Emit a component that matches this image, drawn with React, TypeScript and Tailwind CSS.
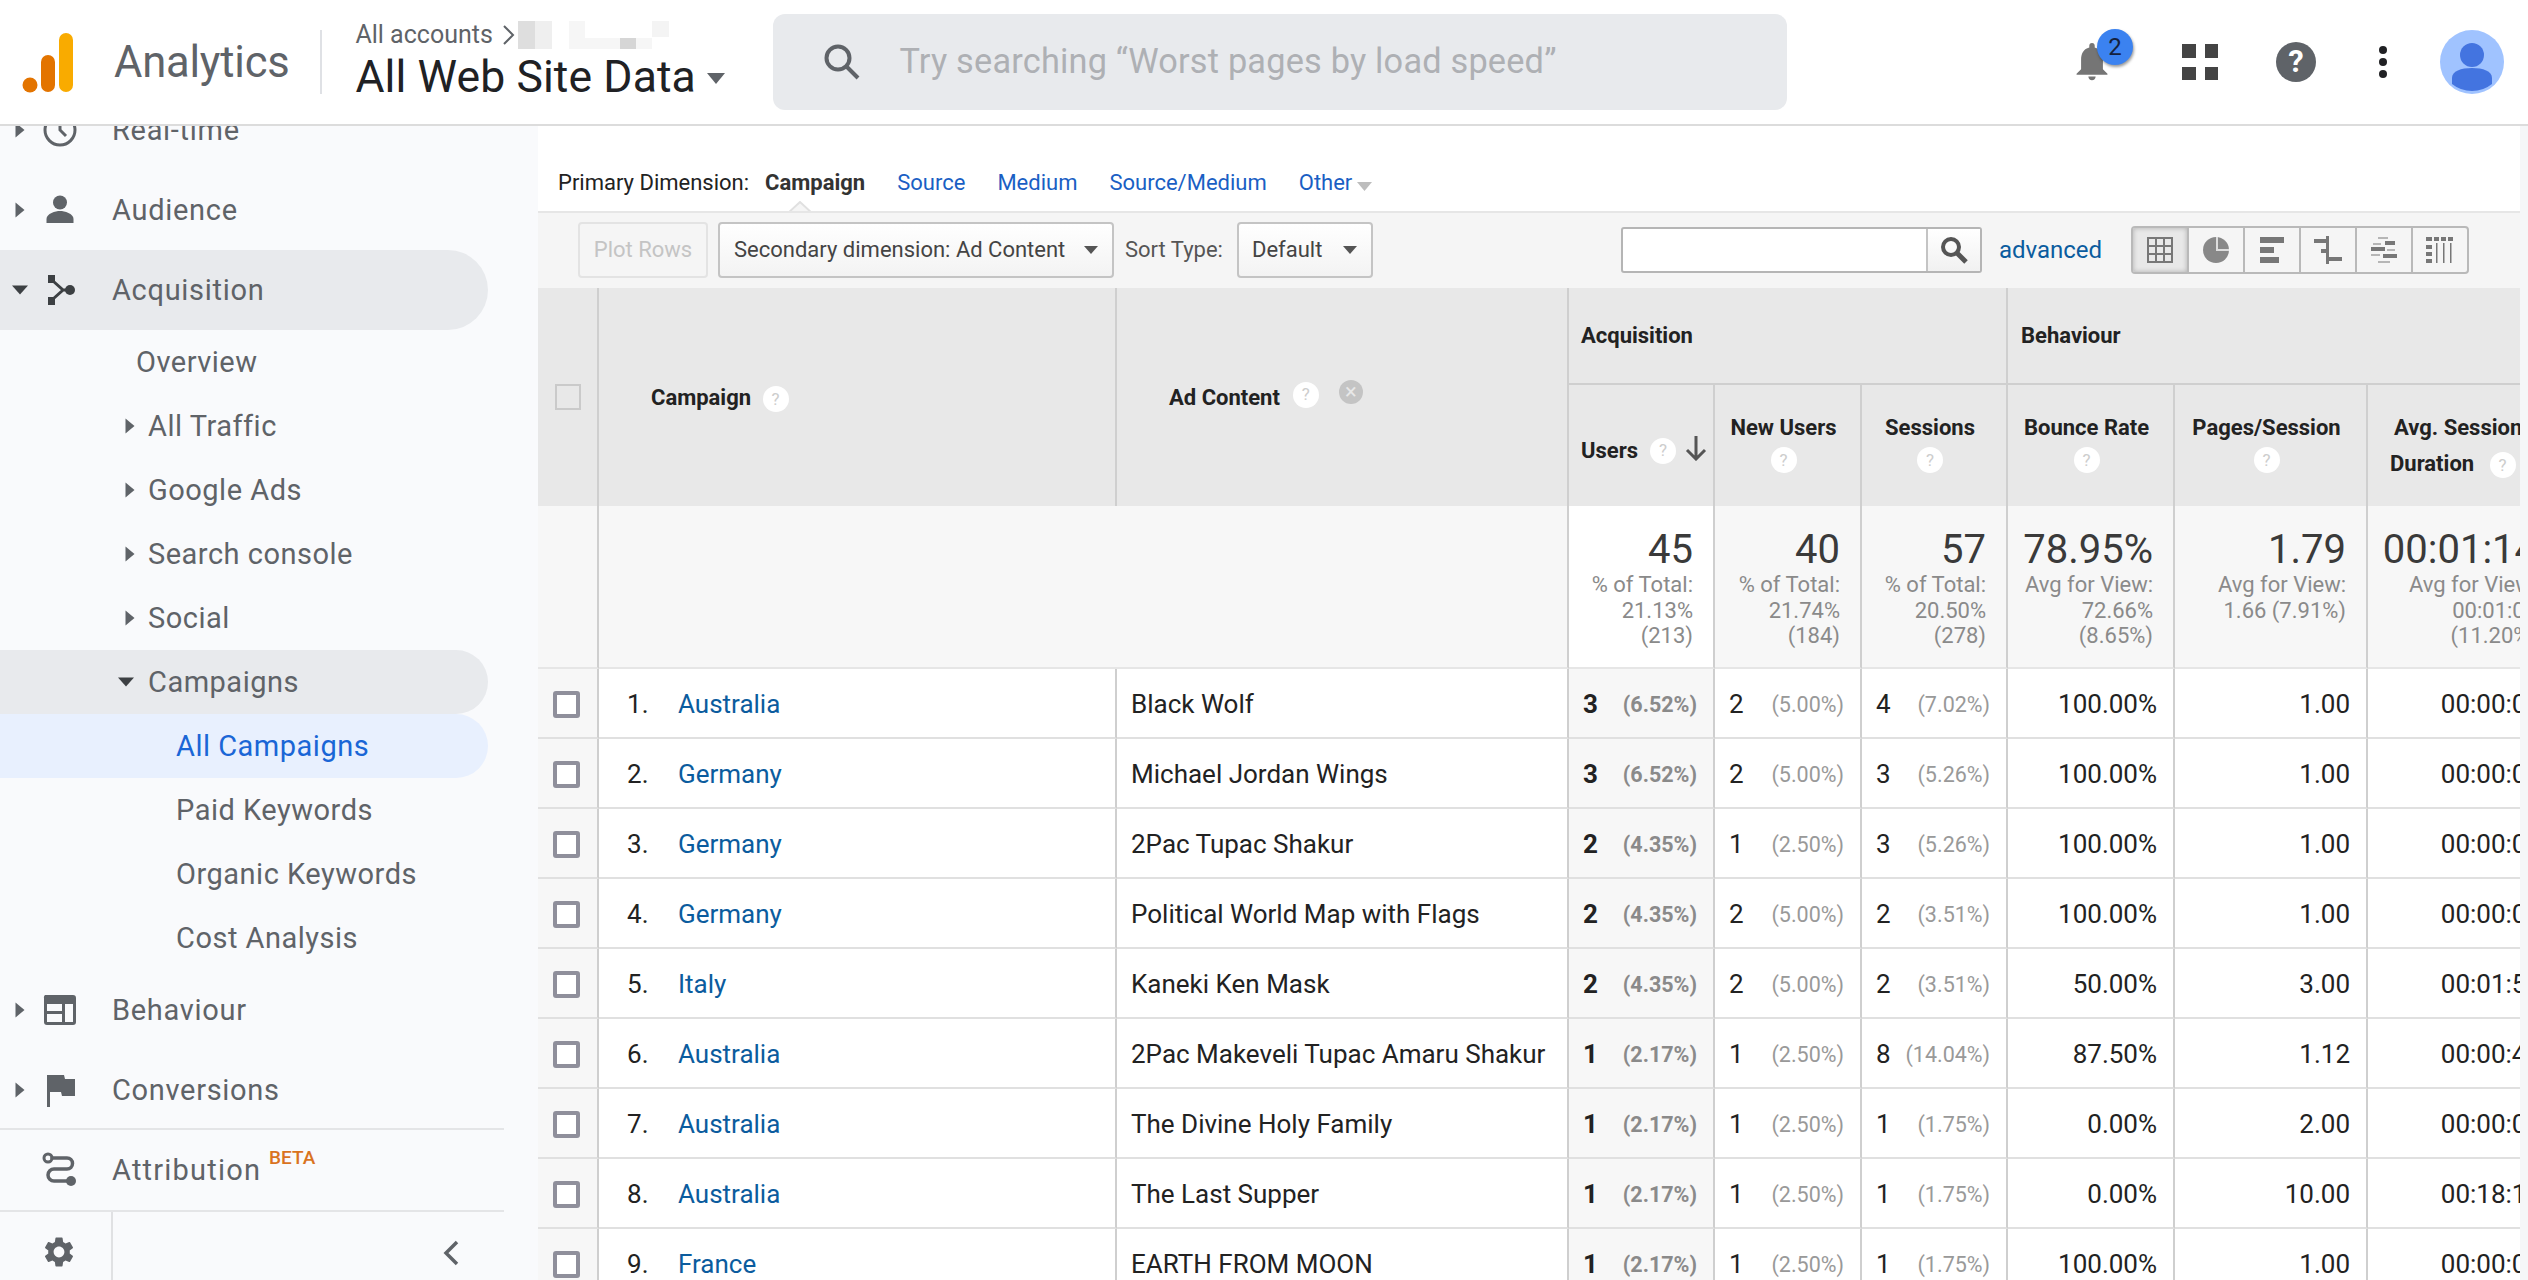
import { type ReactNode } from "react";

function Caret({ open = false, dark = false }: { open?: boolean; dark?: boolean }) {
  if (open) {
    return (
      <svg width="18" height="10" viewBox="0 0 18 10" className="shrink-0">
        <path d="M1 0.5h16L9 9.5z" fill={dark ? "#3c4043" : "#5f6368"} />
      </svg>
    );
  }
  return (
    <svg width="10" height="16" viewBox="0 0 10 16" className="shrink-0">
      <path d="M0.5 0.5L9.5 8L0.5 15.5z" fill="#5f6368" />
    </svg>
  );
}

function NavIcon({ name }: { name: string }) {
  const fill = "#5f6368";
  if (name === "clock")
    return (
      <svg width="36" height="36" viewBox="0 0 36 36" fill="none">
        <circle cx="18" cy="18" r="15" stroke={fill} strokeWidth="3" />
        <path d="M18 9v9l6 6" stroke={fill} strokeWidth="3" />
      </svg>
    );
  if (name === "person")
    return (
      <svg width="36" height="36" viewBox="0 0 36 36">
        <circle cx="18" cy="10.5" r="7" fill={fill} />
        <path d="M4.500 31v-4c0-5.500 9-8 13.500-8s13.500 2.500 13.500 8v4z" fill={fill} />
      </svg>
    );
  if (name === "fork")
    return (
      <svg width="36" height="36" viewBox="0 0 36 36" fill="none">
        <path d="M6 3h7v8H6zM6 25h7v8H6z" fill="#3c4043" />
        <path d="M11 9l10 9-10 9M21 18h6" stroke="#3c4043" strokeWidth="3" />
        <circle cx="28" cy="18" r="5" fill="#3c4043" />
      </svg>
    );
  if (name === "layout")
    return (
      <svg width="36" height="36" viewBox="0 0 36 36">
        <path
          fillRule="evenodd"
          clipRule="evenodd"
          d="M3 3h28a3 3 0 0 1 3 3v24a3 3 0 0 1-3 3H5a3 3 0 0 1-3-3V6a3 3 0 0 1 1-3zM5 12v7h15v-7zm18 0v18h8V12zM5 22v8h15v-8z"
          fill={fill}
        />
      </svg>
    );
  if (name === "flag")
    return (
      <svg width="36" height="36" viewBox="0 0 36 36">
        <path d="M5 3h3v32H5zM8 3h14l1 4h10v17H20l-1-4H8z" fill={fill} />
      </svg>
    );
  if (name === "route")
    return (
      <svg width="36" height="36" viewBox="0 0 36 36" fill="none">
        <circle cx="6" cy="6" r="4" stroke={fill} strokeWidth="3" />
        <path
          d="M10 6h15a5.500 5.500 0 0 1 0 11H12a6 6 0 0 0 0 12h14"
          stroke={fill}
          strokeWidth="3.500"
          strokeLinecap="round"
        />
        <circle cx="29" cy="29" r="5" fill={fill} />
      </svg>
    );
  return null;
}

function NavItem({
  label,
  icon,
  state,
  active,
}: {
  label: ReactNode;
  icon: string;
  state?: "closed" | "open";
  active?: boolean;
}) {
  return (
    <div
      className={`flex h-[80px] shrink-0 items-center rounded-r-[40px] ${active ? "w-[488px] bg-[#e8eaed]" : "w-full"}`}
    >
      <div className="flex w-[40px] justify-center">
        {state && <Caret open={state === "open"} dark />}
      </div>
      <div className="flex w-[40px] justify-center">
        <NavIcon name={icon} />
      </div>
      <div className="ml-[32px] pt-[2px] text-[29px] tracking-[0.7px] whitespace-nowrap">{label}</div>
    </div>
  );
}

function SubItem({
  label,
  level,
  state,
}: {
  label: string;
  level: 1 | 2;
  state?: "closed" | "open";
}) {
  const open = state === "open";
  const selected = label === "All Campaigns";
  return (
    <div
      className={`flex h-[64px] shrink-0 items-center rounded-r-[32px] text-[29px] tracking-[0.5px] ${
        open ? "bg-[#e8eaed]" : selected ? "bg-[#e8f0fe] text-[#1a66d6]" : ""
      } ${open || selected ? "w-[488px]" : "w-full"}`}
    >
      {level === 2 ? (
        <div className="w-[176px]" />
      ) : state ? (
        <div className="flex w-[148px] items-center justify-end pr-[13px]">
          <Caret open={open} dark={open} />
        </div>
      ) : (
        <div className="w-[136px]" />
      )}
      <span className="pt-[2px] whitespace-nowrap">{label}</span>
    </div>
  );
}

function Sidebar() {
  return (
    <aside className="flex h-full w-[538px] shrink-0 flex-col overflow-hidden bg-[#f9fafc] text-[#5f6368]">
      <div className="-mt-[36px]">
        <NavItem label="Real-time" icon="clock" state="closed" />
      </div>
      <NavItem label="Audience" icon="person" state="closed" />
      <NavItem label="Acquisition" icon="fork" state="open" active />
      <SubItem label="Overview" level={1} />
      <SubItem label="All Traffic" level={1} state="closed" />
      <SubItem label="Google Ads" level={1} state="closed" />
      <SubItem label="Search console" level={1} state="closed" />
      <SubItem label="Social" level={1} state="closed" />
      <SubItem label="Campaigns" level={1} state="open" />
      <SubItem label="All Campaigns" level={2} />
      <SubItem label="Paid Keywords" level={2} />
      <SubItem label="Organic Keywords" level={2} />
      <SubItem label="Cost Analysis" level={2} />
      <NavItem label="Behaviour" icon="layout" state="closed" />
      <NavItem label="Conversions" icon="flag" state="closed" />
      <div className="-mt-[2px] h-[2px] w-[504px] shrink-0 bg-[#e4e5e7]" />
      <NavItem
        icon="route"
        label={
          <span className="flex">
            <span className="tracking-[1.200px]">Attribution</span>
            <span className="mt-[-5px] ml-[8px] text-[19px] font-medium tracking-normal text-[#d9731f]">BETA</span>
          </span>
        }
      />
      <div className="h-[2px] w-[504px] shrink-0 bg-[#e4e5e7]" />
      <div className="flex h-[80px] w-[504px] shrink-0">
        <div className="flex h-full w-[113px] justify-center border-r-2 border-[#e0e1e3] pt-[22px] pl-[6px]">
          <svg width="36" height="36" viewBox="0 0 24 24" fill="#5f6368">
            <path d="M19.140 12.940c.040-.300.060-.610.060-.940 0-.320-.020-.640-.070-.940l2.030-1.580a.49.49 0 0 0 .120-.610l-1.920-3.320a.488.488 0 0 0-.590-.220l-2.390.960c-.500-.380-1.030-.700-1.620-.940l-.360-2.540a.484.484 0 0 0-.480-.410h-3.840c-.240 0-.430.170-.470.410l-.360 2.540c-.590.240-1.130.570-1.620.940l-2.390-.960c-.220-.080-.470 0-.590.220L2.740 8.870c-.120.210-.080.470.120.610l2.030 1.580c-.050.300-.090.630-.090.940s.020.640.070.940l-2.030 1.580a.49.49 0 0 0-.120.610l1.920 3.320c.120.220.370.290.590.220l2.390-.960c.500.380 1.030.700 1.620.940l.360 2.540c.050.240.240.410.480.410h3.840c.240 0 .440-.170.470-.410l.360-2.540c.590-.240 1.130-.560 1.620-.940l2.390.960c.220.080.470 0 .590-.220l1.920-3.320c.120-.220.070-.470-.120-.610l-2.010-1.580zM12 15.600A3.610 3.610 0 0 1 8.400 12c0-1.980 1.620-3.600 3.600-3.600s3.600 1.620 3.600 3.600-1.620 3.600-3.600 3.600z" />
          </svg>
        </div>
        <div className="flex flex-1 justify-end pt-[28px]">
          <svg width="18" height="26" viewBox="0 0 18 26" fill="none" className="mr-[44px]">
            <path d="M15 2L4 13l11 11" stroke="#5f6368" strokeWidth="3.500" />
          </svg>
        </div>
      </div>
    </aside>
  );
}

function TopBar() {
  return (
    <header className="flex h-[126px] shrink-0 items-center border-b-2 border-[#dcdcdc] bg-white">
      <svg width="52" height="60" viewBox="0 0 52 60" className="mt-[1px] ml-[22px] shrink-0">
        <circle cx="8" cy="52" r="7.500" fill="#e37400" />
        <rect x="19" y="22" width="14" height="37" rx="7" fill="#e37400" />
        <rect x="37" y="0" width="14" height="59" rx="7" fill="#f9ab00" />
      </svg>
      <div className="mt-[2px] ml-[40px] text-[43.500px] leading-none tracking-[-0.2px] text-[#5f6368]">Analytics</div>
      <div className="ml-[31px] h-[64px] w-[2px] bg-[#dfe1e5]" />
      <div className="ml-[33px] -mt-[4px] w-[418px] shrink-0">
        <div className="flex h-[30px] items-center text-[25px] leading-none text-[#5f6368]">
          All accounts
          <svg width="14" height="24" viewBox="0 0 14 24" fill="none" className="ml-[9px]">
            <path d="M2 3l9 9-9 9" stroke="#5f6368" strokeWidth="2" />
          </svg>
          <div className="ml-[2px] flex h-[28px] items-start">
            <div className="h-[28px] w-[17px] bg-[#dedede]" />
            <div className="h-[28px] w-[17px] bg-[#efefef]" />
            <div className="ml-[17px] h-[28px] w-[16px] bg-[#f6f6f6]" />
            <div className="mt-[17px] h-[11px] w-[35px] bg-[#f6f6f6]" />
            <div className="mt-[17px] h-[11px] w-[16px] bg-[#d6d6d6]" />
            <div className="mt-[17px] h-[11px] w-[16px] bg-[#f6f6f6]" />
            <div className="h-[16px] w-[17px] bg-[#f4f4f4]" />
          </div>
        </div>
        <div className="mt-[3px] flex items-center text-[44.500px] leading-[48px] tracking-[0.1px] text-[#202124]">
          All Web Site Data
          <svg width="18" height="11" viewBox="0 0 18 11" className="mt-[3px] ml-[11px]">
            <path d="M0 0h18L9 11z" fill="#5f6368" />
          </svg>
        </div>
      </div>
      <div className="flex h-[96px] w-[1014px] shrink-0 items-center rounded-[12px] bg-[#e8eaed] pl-[50px] text-[34.300px] text-[#aeb0b4]">
        <svg width="38" height="38" viewBox="0 0 38 38" fill="none">
          <circle cx="15" cy="15" r="11.500" stroke="#5f6368" strokeWidth="4" />
          <path d="M23 23l12 12" stroke="#5f6368" strokeWidth="4" />
        </svg>
        <span className="ml-[38px] tracking-[0.2px] whitespace-nowrap">Try searching “Worst pages by load speed”</span>
      </div>
      <div className="ml-auto flex h-full items-center">
        <div className="relative flex h-[40px] w-[34px] justify-center">
          <svg width="34" height="40" viewBox="0 0 36 44">
            <path d="M18 1c2 0 3 1.500 3 3v2c6 1.500 9 6.500 9 13v11l5 5v1H1v-1l5-5V19c0-6.500 3-11.500 9-13V4c0-1.500 1-3 3-3zM14 38h8c0 2.500-1.800 4-4 4s-4-1.500-4-4z" fill="#757575" />
          </svg>
          <div className="absolute top-[-13px] left-[22px] flex h-[36px] w-[36px] items-center justify-center rounded-full bg-[#3b82f0] text-[24px] text-[#14213d] shadow-[1px_2px_3px_rgba(0,0,0,0.4)]">
            2
          </div>
        </div>
        <div className="ml-[73px] grid h-[36px] w-[36px] grid-cols-2 gap-x-[9px] gap-y-[9px]">
          <div className="bg-[#444]" />
          <div className="bg-[#444]" />
          <div className="bg-[#444]" />
          <div className="bg-[#444]" />
        </div>
        <div className="ml-[58px] flex h-[40px] w-[40px] items-center justify-center rounded-full bg-[#5f6368] text-[31px] font-bold text-white">
          ?
        </div>
        <div className="ml-[63px] flex w-[8px] flex-col gap-[4px]">
          <div className="h-[8px] w-[8px] rounded-full bg-[#202124]" />
          <div className="h-[8px] w-[8px] rounded-full bg-[#202124]" />
          <div className="h-[8px] w-[8px] rounded-full bg-[#202124]" />
        </div>
        <svg width="64" height="64" viewBox="0 0 64 64" className="mr-[24px] ml-[53px]">
          <circle cx="32" cy="32" r="32" fill="#a0c3ff" />
          <circle cx="32" cy="25" r="12" fill="#4374e0" />
          <path d="M12 54V48c0-7 9-10 20-10s20 3 20 10v6a32 32 0 0 1-40 0z" fill="#4374e0" />
        </svg>
      </div>
    </header>
  );
}

function Help({ className = "" }: { className?: string }) {
  return (
    <span
      className={`inline-flex h-[26px] w-[26px] items-center justify-center rounded-full bg-white text-[17px] leading-none font-normal text-[#cdcdcd] ${className}`}
    >
      ?
    </span>
  );
}

function Dropdown({ label, className }: { label: string; className: string }) {
  return (
    <div
      className={`flex h-[56px] items-center justify-between rounded-[4px] border-2 border-[#c4c4c4] bg-gradient-to-b from-white to-[#f3f3f3] text-[22px] text-[#444] ${className}`}
    >
      <span className="whitespace-nowrap">{label}</span>
      <svg width="14" height="8" viewBox="0 0 14 8">
        <path d="M0 0h14L7 8z" fill="#555" />
      </svg>
    </div>
  );
}

function ViewIcon({ index }: { index: number }) {
  const c = "#777";
  if (index === 0)
    return (
      <svg width="28" height="28" viewBox="0 0 28 28" fill="none" stroke={c} strokeWidth="2">
        <path d="M2 2h24v24H2zM10 2v24M18 2v24M2 10h24M2 18h24" />
      </svg>
    );
  if (index === 1)
    return (
      <svg width="28" height="28" viewBox="0 0 28 28">
        <circle cx="14" cy="14" r="13" fill="#888" />
        <path d="M15 1v13h12" stroke="#ddd" strokeWidth="2" fill="none" />
      </svg>
    );
  if (index === 2)
    return (
      <svg width="26" height="28" viewBox="0 0 26 28" fill={c}>
        <rect x="1" y="1" width="24" height="6" />
        <rect x="1" y="11" width="14" height="6" />
        <rect x="1" y="21" width="19" height="6" />
      </svg>
    );
  if (index === 3)
    return (
      <svg width="28" height="28" viewBox="0 0 28 28" fill={c}>
        <rect x="0" y="3" width="14" height="4" />
        <rect x="12" y="0" width="3" height="28" />
        <rect x="7" y="13" width="8" height="4" />
        <rect x="12" y="21" width="16" height="4" />
      </svg>
    );
  if (index === 4)
    return (
      <svg width="28" height="28" viewBox="0 0 28 28" fill={c}>
        <rect x="8" y="1" width="10" height="2" opacity="0.5" />
        <rect x="15" y="5" width="10" height="4" />
        <rect x="3" y="7" width="8" height="2" opacity="0.5" />
        <rect x="1" y="11" width="14" height="4" />
        <rect x="17" y="13" width="8" height="2" opacity="0.5" />
        <rect x="13" y="18" width="14" height="4" />
        <rect x="1" y="18" width="9" height="2" opacity="0.5" />
        <rect x="8" y="25" width="12" height="2" opacity="0.5" />
      </svg>
    );
  return (
    <svg width="30" height="28" viewBox="0 0 30 28" fill={c}>
      <rect x="1" y="1" width="6" height="4" />
      <rect x="1" y="9" width="6" height="4" />
      <rect x="1" y="16" width="6" height="4" />
      <rect x="1" y="23" width="6" height="4" />
      <rect x="9" y="1" width="5" height="4" />
      <rect x="16" y="1" width="5" height="4" />
      <rect x="23" y="1" width="5" height="4" />
      <rect x="11" y="7" width="1.500" height="20" />
      <rect x="18" y="7" width="1.500" height="20" />
      <rect x="25" y="7" width="1.500" height="20" />
    </svg>
  );
}

function Toolbar() {
  return (
    <div className="relative h-[77px] shrink-0 border-t-2 border-[#e6e6e6] bg-[#f5f5f5]">
      <div className="flex h-full items-center pb-[2px] pl-[40px]">
        <div className="flex h-[56px] w-[130px] items-center justify-center rounded-[4px] border-2 border-[#e3e3e3] text-[22px] text-[#c4c4c4]">
          Plot Rows
        </div>
        <Dropdown label="Secondary dimension: Ad Content" className="ml-[10px] w-[396px] pr-[14px] pl-[14px]" />
        <span className="ml-[11px] text-[22px] text-[#555]">Sort Type:</span>
        <Dropdown label="Default" className="ml-[14px] w-[136px] pr-[14px] pl-[13px]" />
        <div className="ml-[248px] flex h-[46px] w-[361px] rounded-[3px] border-2 border-[#b5b5b5] bg-white">
          <div className="flex-1 border-r-2 border-[#c4c4c4]" />
          <div className="flex w-[52px] items-center justify-center bg-gradient-to-b from-white to-[#f1f1f1]">
            <svg width="28" height="28" viewBox="0 0 28 28" fill="none">
              <circle cx="11" cy="11" r="8" stroke="#555" strokeWidth="4" />
              <path d="M17 17l9 9" stroke="#555" strokeWidth="5" />
            </svg>
          </div>
        </div>
        <span className="ml-[17px] text-[24px] text-[#0b5c9e]">advanced</span>
        <div className="ml-[29px] flex h-[48px] w-[338px] overflow-hidden rounded-[4px] border-2 border-[#b9b9b9]">
          {[0, 1, 2, 3, 4, 5].map((i) => (
            <div
              key={i}
              className={`flex flex-1 items-center justify-center ${i > 0 ? "border-l-2 border-[#b9b9b9]" : "bg-[#e8e8e8] shadow-[inset_0_0_5px_rgba(0,0,0,0.25)]"}`}
            >
              <ViewIcon index={i} />
            </div>
          ))}
        </div>
      </div>
    </div>
  );
}

const rows = [
  ["Australia", "Black Wolf", "3", "(6.52%)", "2", "(5.00%)", "4", "(7.02%)", "100.00%", "1.00", "00:00:00"],
  ["Germany", "Michael Jordan Wings", "3", "(6.52%)", "2", "(5.00%)", "3", "(5.26%)", "100.00%", "1.00", "00:00:00"],
  ["Germany", "2Pac Tupac Shakur", "2", "(4.35%)", "1", "(2.50%)", "3", "(5.26%)", "100.00%", "1.00", "00:00:00"],
  ["Germany", "Political World Map with Flags", "2", "(4.35%)", "2", "(5.00%)", "2", "(3.51%)", "100.00%", "1.00", "00:00:00"],
  ["Italy", "Kaneki Ken Mask", "2", "(4.35%)", "2", "(5.00%)", "2", "(3.51%)", "50.00%", "3.00", "00:01:52"],
  ["Australia", "2Pac Makeveli Tupac Amaru Shakur", "1", "(2.17%)", "1", "(2.50%)", "8", "(14.04%)", "87.50%", "1.12", "00:00:41"],
  ["Australia", "The Divine Holy Family", "1", "(2.17%)", "1", "(2.50%)", "1", "(1.75%)", "0.00%", "2.00", "00:00:04"],
  ["Australia", "The Last Supper", "1", "(2.17%)", "1", "(2.50%)", "1", "(1.75%)", "0.00%", "10.00", "00:18:13"],
  ["France", "EARTH FROM MOON", "1", "(2.17%)", "1", "(2.50%)", "1", "(1.75%)", "100.00%", "1.00", "00:00:00"],
];

const totals = [
  { value: "45", lines: ["% of Total:", "21.13%", "(213)"] },
  { value: "40", lines: ["% of Total:", "21.74%", "(184)"] },
  { value: "57", lines: ["% of Total:", "20.50%", "(278)"] },
  { value: "78.95%", lines: ["Avg for View:", "72.66%", "(8.65%)"] },
  { value: "1.79", lines: ["Avg for View:", "1.66 (7.91%)"] },
  { value: "00:01:14", lines: ["Avg for View:", "00:01:06", "(11.20%)"] },
];

const line = "border-[#cfcfcf]";

function DataTable() {
  return (
    <table className="w-[2022px] table-fixed border-separate border-spacing-0 text-[#222]">
      <colgroup>
        <col className="w-[61px]" />
        <col className="w-[518px]" />
        <col className="w-[452px]" />
        <col className="w-[146px]" />
        <col className="w-[147px]" />
        <col className="w-[146px]" />
        <col className="w-[167px]" />
        <col className="w-[193px]" />
        <col className="w-[192px]" />
      </colgroup>
      <thead>
        <tr className="h-[97px]">
          <th rowSpan={2} className={`border-r-2 ${line} bg-[#e8e8e8] pl-[17px] text-left`}>
            <div className="h-[26px] w-[26px] border-2 border-[#cacaca]" />
          </th>
          <th rowSpan={2} className={`border-r-2 ${line} bg-[#e8e8e8] pl-[52px] text-left text-[22px] font-bold`}>
            Campaign <Help className="ml-[6px]" />
          </th>
          <th rowSpan={2} className={`border-r-2 ${line} bg-[#e8e8e8] pl-[52px] text-left text-[22px] font-bold`}>
            <span className="inline-flex items-start">
              <span>Ad Content</span>
              <Help className="mt-[1px] ml-[13px]" />
              <span className="mt-[-1px] ml-[20px] flex h-[24px] w-[24px] items-center justify-center rounded-full bg-[#c4c4c4] text-[22px] leading-none font-normal text-[#e8e8e8]">
                ×
              </span>
            </span>
          </th>
          <th
            colSpan={3}
            className={`border-r-2 border-b-2 ${line} bg-[#e8e8e8] pl-[12px] text-left text-[22px] font-bold`}
          >
            Acquisition
          </th>
          <th colSpan={3} className={`border-b-2 ${line} bg-[#e8e8e8] pl-[13px] text-left text-[22px] font-bold`}>
            Behaviour
          </th>
        </tr>
        <tr className="h-[121px] bg-[#e8e8e8] text-[22px] font-bold">
          <th className={`border-r-2 ${line} pt-[10px] pl-[12px] text-left`}>
            <span className="inline-flex items-center">
              Users
              <Help className="ml-[12px]" />
              <svg width="22" height="26" viewBox="0 0 22 26" fill="none" className="mt-[-6px] ml-[9px]">
                <path d="M11 1v22M2 15l9 9 9-9" stroke="#555" strokeWidth="3" />
              </svg>
            </span>
          </th>
          {["New Users", "Sessions", "Bounce Rate", "Pages/Session"].map((h) => (
            <th key={h} className={`border-r-2 ${line} pr-[8px] pb-[4px] text-center leading-[30px]`}>
              <div>{h}</div>
              <Help className="mt-[4px]" />
            </th>
          ))}
          <th className="pl-[26px] text-left leading-[36px] whitespace-nowrap">
            <div>Avg. Session</div>
            <div className="-ml-[4px]">
              Duration <Help className="ml-[10px]" />
            </div>
          </th>
        </tr>
      </thead>
      <tbody>
        <tr className="h-[163px] align-top">
          <td className={`border-r-2 border-b-2 ${line} border-b-[#e6e6e6] bg-[#f7f7f7]`} />
          <td colSpan={2} className={`border-r-2 border-b-2 ${line} border-b-[#e6e6e6] bg-[#f7f7f7]`} />
          {totals.map((t, i) => (
            <td
              key={t.value}
              className={`border-b-2 border-b-[#e6e6e6] pt-[22px] text-right ${i === 5 ? "pr-[23px]" : "pr-[20px]"} ${
                i === 0 ? "bg-white" : "bg-[#f7f7f7]"
              } ${i < 5 ? `border-r-2 ${line}` : ""}`}
            >
              <div className="text-[40px] leading-[44px] whitespace-nowrap text-[#3a3a3a]">{t.value}</div>
              <div className="text-[22px] leading-[25.500px] whitespace-nowrap text-[#8a8a8a]">
                {t.lines.map((l) => (
                  <div key={l}>{l}</div>
                ))}
              </div>
            </td>
          ))}
        </tr>
        {rows.map((r, i) => (
          <tr key={i} className="h-[70px] text-[26px] [&>td]:pt-[3px]">
            <td className={`border-r-2 border-b-2 ${line} border-b-[#e0e0e0] bg-[#f7f7f7] pl-[15px]`}>
              <div className="h-[27px] w-[27px] rounded-[3px] border-[4px] border-[#8f8f9b] bg-white" />
            </td>
            <td className={`border-r-2 border-b-2 ${line} border-b-[#e0e0e0] pl-[28px]`}>
              <span className="inline-block w-[51px]">{i + 1}.</span>
              <span className="text-[#0b5c9e]">{r[0]}</span>
            </td>
            <td className={`border-r-2 border-b-2 ${line} overflow-hidden border-b-[#e0e0e0] pl-[14px] whitespace-nowrap`}>
              {r[1]}
            </td>
            {[2, 4, 6].map((k) => (
              <td
                key={k}
                className={`border-r-2 border-b-2 ${line} border-b-[#e0e0e0] pr-[16px] pl-[14px] ${k === 2 ? "bg-[#f7f7f7]" : ""}`}
              >
                <div className="flex items-center justify-between whitespace-nowrap">
                  <span className={k === 2 ? "font-bold" : ""}>{r[k]}</span>
                  <span className={`pt-[2px] text-[21.500px] ${k === 2 ? "font-bold text-[#8a8a8a]" : "text-[#999]"}`}>{r[k + 1]}</span>
                </div>
              </td>
            ))}
            <td className={`border-r-2 border-b-2 ${line} border-b-[#e0e0e0] pr-[16px] text-right`}>{r[8]}</td>
            <td className={`border-r-2 border-b-2 ${line} border-b-[#e0e0e0] pr-[16px] text-right`}>{r[9]}</td>
            <td className="border-b-2 border-b-[#e0e0e0] pr-[19px] text-right">{r[10]}</td>
          </tr>
        ))}
      </tbody>
    </table>
  );
}

function DimensionRow() {
  const links = ["Source", "Medium", "Source/Medium"];
  return (
    <div className="relative flex h-[85px] shrink-0 items-end bg-white pb-[12px] pl-[20px] text-[22px]">
      <span className="text-[#222]">Primary Dimension:</span>
      <span className="ml-[16px] font-bold text-[#333]">Campaign</span>
      {links.map((l) => (
        <span key={l} className="ml-[32px] text-[#1a5fc4]">
          {l}
        </span>
      ))}
      <span className="ml-[32px] text-[#1a5fc4]">Other</span>
      <svg width="15" height="9" viewBox="0 0 15 9" className="mb-[8px] ml-[5px]">
        <path d="M0 0h15L7.500 9z" fill="#bdbdbd" />
      </svg>
      <svg width="24" height="12" viewBox="0 0 24 12" className="absolute bottom-[-2px] left-[250px]">
        <path d="M0 12L12 1l12 11" fill="#f5f5f5" stroke="#e0e0e0" strokeWidth="2" />
      </svg>
    </div>
  );
}

export default function App() {
  return (
    <div className="flex h-[1280px] w-[2528px] flex-col overflow-hidden bg-white font-['Roboto',sans-serif]">
      <TopBar />
      <div className="flex min-h-0 flex-1">
        <Sidebar />
        <main className="flex w-[1982px] shrink-0 flex-col overflow-hidden">
          <DimensionRow />
          <Toolbar />
          <div className="overflow-hidden">
            <DataTable />
          </div>
        </main>
        <div className="flex-1 bg-[#f5f6f8]" />
      </div>
    </div>
  );
}
